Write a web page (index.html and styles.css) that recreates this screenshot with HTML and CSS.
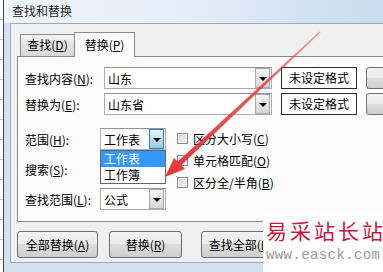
FILE: index.html
```html
<!DOCTYPE html>
<html>
<head>
    <title>查找和替换</title>
    <link rel="stylesheet" href="styles.css">
</head>
<body>
    <div class="screen">
        <div class="sheet"></div>
        <div class="window">
            <div class="titlebar">查找和替换</div>
            <div class="client">
                <div class="tabs">
                    <div class="tab">查找(<u>D</u>)</div>
                    <div class="tab active">替换(<u>P</u>)</div>
                </div>
                <div class="panel">
                    <div class="row">
                        <span class="label">查找内容(<u>N</u>):</span>
                        <div class="combo wide"><span class="value">山东</span><span class="drop"></span></div>
                        <div class="fmt">未设定格式</div>
                        <div class="btn side"></div>
                    </div>
                    <div class="row second">
                        <span class="label">替换为(<u>E</u>):</span>
                        <div class="combo wide"><span class="value">山东省</span><span class="drop"></span></div>
                        <div class="fmt">未设定格式</div>
                        <div class="btn side"></div>
                    </div>
                    <div class="options">
                        <div class="fields">
                            <div class="row">
                                <span class="label short">范围(<u>H</u>):</span>
                                <div class="combo small">
                                    <span class="value">工作表</span><span class="drop hot"></span>
                                    <ul class="list">
                                        <li class="selected">工作表</li>
                                        <li>工作簿</li>
                                    </ul>
                                </div>
                            </div>
                            <div class="row">
                                <span class="label short">搜索(<u>S</u>):</span>
                                <!-- 被下拉列表盖住 -->
                                <div class="combo small"><span class="value"></span><span class="drop"></span></div>
                            </div>
                            <div class="row">
                                <span class="label short">查找范围(<u>L</u>):</span>
                                <div class="combo small"><span class="value">公式</span><span class="drop"></span></div>
                            </div>
                        </div>
                        <div class="checks">
                            <label class="check"><span class="box"></span>区分大小写(<u>C</u>)</label>
                            <label class="check"><span class="box"></span>单元格匹配(<u>O</u>)</label>
                            <label class="check"><span class="box"></span>区分全/半角(<u>B</u>)</label>
                        </div>
                    </div>
                </div>
                <div class="buttons">
                    <div class="btn all">全部替换(<u>A</u>)</div>
                    <div class="btn one">替换(<u>R</u>)</div>
                    <div class="btn find">查找全部(<u>I</u>)</div>
                </div>
            </div>
        </div>

        <!-- 红色箭头标注 -->
        <svg class="arrow" width="383" height="272" viewBox="0 0 383 272">
            <defs>
                <linearGradient id="fade" x1="320" y1="32" x2="165" y2="177" gradientUnits="userSpaceOnUse">
                    <stop offset="0" stop-color="#e2454a" stop-opacity="0.45"/>
                    <stop offset="0.4" stop-color="#e2393e" stop-opacity="0.85"/>
                    <stop offset="1" stop-color="#e8353a"/>
                </linearGradient>
            </defs>
            <polygon fill="url(#fade)" points="320.5,32.5 319.5,31.5 177.9,161.6 174,158 165,177 185,169 181.3,165.2"/>
        </svg>

        <div class="watermark">
            <div class="wm-name">易采站长站</div>
            <div class="wm-url">www.easck.com</div>
        </div>
    </div>
</body>
</html>
```

FILE: styles.css
```css
* { box-sizing: border-box; }
body { margin: 0; width: 383px; height: 272px; overflow: hidden; background: #fff; font-family: "Noto Sans CJK SC", sans-serif; font-size: 12px; color: #000; }
u { text-decoration: underline; text-underline-offset: 1px; }

.screen { position: relative; display: flex; width: 383px; height: 272px; overflow: hidden; }
.sheet { width: 3px; flex: none; background: repeating-linear-gradient(to bottom, #fff 0, #fff 19px, #c9c9c9 19px, #c9c9c9 20px); }
.window { flex: none; width: 420px; border-left: 1px solid #3d4654; background: #d3e1f1; }

.titlebar { height: 23px; line-height: 21px; padding-left: 8px; font-size: 12px; color: #1e1e1e; background: linear-gradient(to right, #f1f5fa 0%, #e4edf7 45%, #c3d7ee 100%); }

.client { margin-left: 6px; height: 240px; border: 1px solid #9aa9bc; border-right: none; background: #f0f0f0; }

.tabs { display: flex; align-items: flex-end; height: 32px; padding-left: 9px; }
.tab { height: 22px; width: 54px; line-height: 20px; text-align: center; border: 1px solid #898c95; border-bottom: none; border-right: none; background: linear-gradient(to bottom, #f3f3f3, #e2e2e2 50%, #d8d8d8); }
.tab.active { position: relative; z-index: 1; height: 25px; width: 61px; margin-bottom: -1px; border-right: 1px solid #898c95; line-height: 23px; background: #fcfcfc; }

.panel { margin-left: 6px; width: 420px; height: 166px; border: 1px solid #898c95; background: #fcfcfc; padding: 10px 0 0 7px; }
.row { display: flex; align-items: center; height: 22px; }
.row.second { margin-top: 4px; }
.label { width: 79px; flex: none; }
.label.short { width: 75px; }

.combo { position: relative; display: flex; align-items: center; height: 22px; border: 1px solid #abadb3; border-top-color: #8f939c; background: #fff; }
.combo .value { flex: 1; padding-left: 3px; white-space: nowrap; }
.combo.wide { width: 168px; }
.combo.small { width: 66px; }
.drop { position: relative; width: 15px; height: 20px; margin-right: 1px; border: 1px solid #a9a9a9; background: linear-gradient(to bottom, #f4f4f4, #e6e6e6 50%, #d6d6d6); }
.drop::after { content: ""; position: absolute; left: 3px; top: 8px; border-left: 4px solid transparent; border-right: 4px solid transparent; border-top: 4px solid #000; }
.drop.hot { border-color: #3c7fb1; background: linear-gradient(to bottom, #e7f5fd, #bfe4f9 50%, #8ccaf0); }

.list { position: absolute; z-index: 2; left: -1px; top: 21px; width: 66px; margin: 0; padding: 0; list-style: none; border: 1px solid #646464; background: #fff; }
.list li { height: 16px; line-height: 15px; padding-left: 3px; }
.list li.selected { background: #3399ff; color: #fff; }

.fmt { width: 76px; height: 22px; margin-left: 9px; line-height: 20px; text-align: center; border: 1px solid #2b2b2b; background: #fff; }
.btn { height: 27px; line-height: 25px; text-align: center; border: 1px solid #707070; border-radius: 3px; background: linear-gradient(to bottom, #f2f2f2, #ebebeb 50%, #dddddd 50%, #cfcfcf); }
.btn.side { width: 40px; height: 22px; margin-left: 9px; }

.options { display: flex; margin-top: 13px; }
.fields { display: flex; flex-direction: column; gap: 8px; }
.checks { display: flex; flex-direction: column; margin: -1px 0 0 11px; }
.check { display: flex; align-items: center; height: 22px; }
.box { width: 11px; height: 11px; margin-right: 5px; border: 1px solid #8e8f8f; background: linear-gradient(135deg, #d5d5d5, #f6f6f6); box-shadow: inset 0 0 0 1px #f4f4f4; }

.buttons { display: flex; margin-top: 9px; }
.btn.all { width: 81px; margin-left: 6px; }
.btn.one { width: 73px; margin-left: 11px; }
.btn.find { width: 75px; margin-left: 19px; }

.arrow { position: absolute; left: 0; top: 0; pointer-events: none; z-index: 5; }

.watermark { position: absolute; z-index: 6; left: 263px; top: 214px; width: 120px; height: 58px; background: #fff; padding: 4px 0 0 3px; }
.wm-name { font-size: 21px; line-height: 24px; letter-spacing: 3px; color: #c8163e; white-space: nowrap; }
.wm-url { margin-top: 6px; font-family: "Liberation Mono", monospace; font-size: 14px; line-height: 14px; letter-spacing: 0.4px; color: #9b9b9b; white-space: nowrap; }
```
